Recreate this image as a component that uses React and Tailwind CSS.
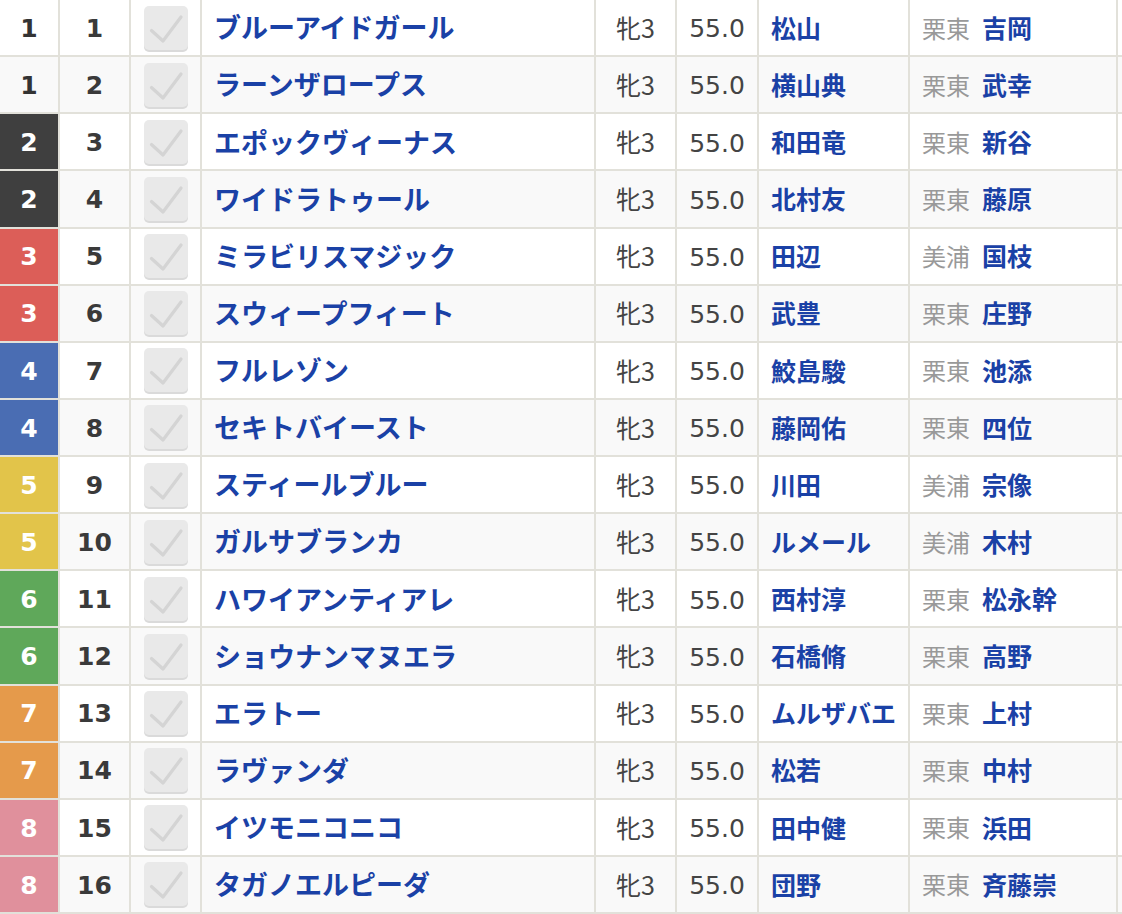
import React from "react";

const rows = [
  [1, 1, "ブルーアイドガール", "松山", "栗東", "吉岡"],
  [1, 2, "ラーンザロープス", "横山典", "栗東", "武幸"],
  [2, 3, "エポックヴィーナス", "和田竜", "栗東", "新谷"],
  [2, 4, "ワイドラトゥール", "北村友", "栗東", "藤原"],
  [3, 5, "ミラビリスマジック", "田辺", "美浦", "国枝"],
  [3, 6, "スウィープフィート", "武豊", "栗東", "庄野"],
  [4, 7, "フルレゾン", "鮫島駿", "栗東", "池添"],
  [4, 8, "セキトバイースト", "藤岡佑", "栗東", "四位"],
  [5, 9, "スティールブルー", "川田", "美浦", "宗像"],
  [5, 10, "ガルサブランカ", "ルメール", "美浦", "木村"],
  [6, 11, "ハワイアンティアレ", "西村淳", "栗東", "松永幹"],
  [6, 12, "ショウナンマヌエラ", "石橋脩", "栗東", "高野"],
  [7, 13, "エラトー", "ムルザバエ", "栗東", "上村"],
  [7, 14, "ラヴァンダ", "松若", "栗東", "中村"],
  [8, 15, "イツモニコニコ", "田中健", "栗東", "浜田"],
  [8, 16, "タガノエルピーダ", "団野", "栗東", "斉藤崇"],
];

const wakuClass = {
  1: "bg-transparent text-[#333333]",
  2: "bg-[#3f3f3f] text-white",
  3: "bg-[#dc5e58] text-white",
  4: "bg-[#4a6db3] text-white",
  5: "bg-[#e2c44a] text-white",
  6: "bg-[#5fa85a] text-white",
  7: "bg-[#e59a4b] text-white",
  8: "bg-[#e0909c] text-white",
};

function Check() {
  return (
    <div className="w-[44px] h-[44px] rounded-[5px] bg-[#e9e9e9] shadow-[0_2px_0_#dadada] flex items-center justify-center">
      <svg width="44" height="44" viewBox="0 0 44 44">
        <polyline
          points="7.5,24.5 19,35 37,11"
          fill="none"
          stroke="#d4d4d4"
          strokeWidth="3.2"
          strokeLinecap="round"
          strokeLinejoin="round"
        />
      </svg>
    </div>
  );
}

export default function App() {
  return (
    <div
      className="w-[1122px] h-[914px] overflow-hidden bg-white"
      style={{ fontFamily: '"Noto Sans CJK JP", "Noto Sans", sans-serif' }}
    >
      {rows.map(([waku, num, name, jockey, area, trainer], i) => (
        <div
          key={num}
          className={`h-[57.125px] grid grid-cols-[60px_71px_71px_394px_81px_82px_151px_208px_1fr] border-b-2 border-[#e2e1da] ${
            i % 2 === 1 ? "bg-[#f9f9f9]" : "bg-white"
          }`}
        >
          <div
            className={`flex items-center justify-center pt-[2px] border-r-2 border-[#e2e1da] text-[25px] font-bold font-['DejaVu_Sans',sans-serif] ${wakuClass[waku]}`}
          >
            {waku}
          </div>
          <div className="flex items-center justify-center pt-[2px] border-r-2 border-[#e2e1da] text-[25px] font-bold text-[#3a3a3a] font-['DejaVu_Sans',sans-serif]">
            {num}
          </div>
          <div className="flex items-center justify-center border-r-2 border-[#e2e1da]">
            <Check />
          </div>
          <div className="flex items-center pl-[12px] border-r-2 border-[#e2e1da] text-[27px] font-bold text-[#1a41a6] whitespace-nowrap">
            {name}
          </div>
          <div className="flex items-center justify-center border-r-2 border-[#e2e1da] text-[25px] text-[#444444]">
            牝3
          </div>
          <div className="flex items-center justify-center pt-[3px] border-r-2 border-[#e2e1da] text-[25px] text-[#444444] font-['DejaVu_Sans',sans-serif]">
            55.0
          </div>
          <div className="flex items-center pl-[12px] border-r-2 border-[#e2e1da] text-[25px] font-bold text-[#1a41a6] whitespace-nowrap">
            {jockey}
          </div>
          <div className="flex items-center pl-[12px] border-r-2 border-[#e2e1da] whitespace-nowrap">
            <span className="text-[24px] text-[#999999]">{area}</span>
            <span className="ml-[12px] text-[25px] font-bold text-[#1a41a6]">{trainer}</span>
          </div>
          <div />
        </div>
      ))}
    </div>
  );
}
